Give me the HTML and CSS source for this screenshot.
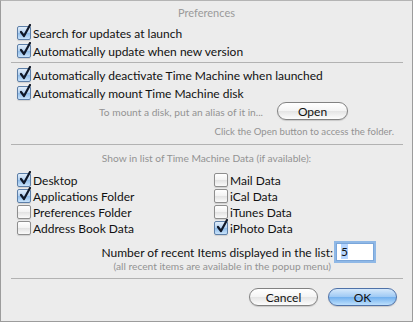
FILE: index.html
```html
<!DOCTYPE html>
<html lang="en">
<head>
  <meta charset="UTF-8">
  <title>Preferences</title>
  <link rel="stylesheet" href="styles.css">
</head>
<body>
  <div class="window">
    <div class="title">Preferences</div>
    <label class="check"><span class="box on"></span>Search for updates at launch</label>
    <label class="check"><span class="box on"></span>Automatically update when new version</label>
    <div class="separator first"></div>
    <label class="check"><span class="box on"></span>Automatically deactivate Time Machine when launched</label>
    <label class="check"><span class="box on"></span>Automatically mount Time Machine disk</label>
    <div class="openRow">
      <span class="hint">To mount a disk, put an alias of it in...</span>
      <button class="pushButton open">Open</button>
    </div>
    <div class="clickRow">
      <span class="hint">Click the Open button to access the folder.</span>
    </div>
    <div class="separator"></div>
    <div class="listLabel hint">Show in list of Time Machine Data (if available):</div>
    <div class="dataGrid">
      <label class="check"><span class="box on"></span>Desktop</label>
      <label class="check"><span class="box"></span>Mail Data</label>
      <label class="check"><span class="box on"></span>Applications Folder</label>
      <label class="check"><span class="box"></span>iCal Data</label>
      <label class="check"><span class="box"></span>Preferences Folder</label>
      <label class="check"><span class="box"></span>iTunes Data</label>
      <label class="check"><span class="box"></span>Address Book Data</label>
      <label class="check"><span class="box on"></span>iPhoto Data</label>
    </div>
    <div class="recentRow">
      <span>Number of recent Items displayed in the list:</span>
      <span class="field"><span class="selected">5</span></span>
    </div>
    <div class="recentNote">(all recent items are available in the popup menu)</div>
    <div class="separator last"></div>
    <div class="buttons">
      <button class="pushButton">Cancel</button>
      <button class="pushButton default">OK</button>
    </div>
  </div>
</body>
</html>
```

FILE: styles.css
```css
* {
  margin: 0;
  padding: 0;
  box-sizing: border-box;
}
body {
  background-color: #fff;
  font-family: Lato, "Liberation Sans", sans-serif;
  font-size: 12px;
  color: #111;
}
.window {
  width: 413px;
  height: 322px;
  background-color: #ececec;
  border: 1px solid #9c9c9c;
  border-top-color: #b4b4b4;
}
.title {
  height: 23px;
  line-height: 24px;
  text-align: center;
  font-size: 11px;
  color: #9a9a9a;
}
.check {
  display: flex;
  align-items: center;
  height: 18px;
  padding-left: 16px;
  white-space: nowrap;
}
.box {
  width: 14px;
  height: 14px;
  margin-right: 2px;
  border: 1px solid #8e8e8e;
  border-radius: 2px;
  background: linear-gradient(#ffffff, #f2f2f2 50%, #e2e2e2 51%, #fafafa);
  box-shadow: 0 1px 1px rgba(0, 0, 0, 0.12);
  position: relative;
  flex: none;
}
.box.on {
  border-color: #5d7fa8;
  background: linear-gradient(#e2eefa, #b3d1f1 50%, #8fbce9 51%, #c9e3fb);
}
.box.on::after {
  content: "";
  position: absolute;
  left: 1px;
  top: -3px;
  width: 12px;
  height: 14px;
  background: no-repeat center / contain url("data:image/svg+xml;utf8,<svg xmlns='http://www.w3.org/2000/svg' viewBox='0 0 12 14'><path d='M2 8 L5 12 L11 1' fill='none' stroke='%23101828' stroke-width='2.2' stroke-linejoin='round' stroke-linecap='round'/></svg>");
}
.separator {
  height: 1px;
  margin: 2px 9px 3px 10px;
  background-color: #b2b2b2;
}
.hint {
  font-size: 10.2px;
  color: #939393;
}
.openRow {
  display: flex;
  justify-content: flex-end;
  align-items: baseline;
  gap: 14px;
  height: 20px;
  padding-right: 64px;
}
.clickRow {
  display: flex;
  justify-content: flex-end;
  height: 20px;
  line-height: 20px;
  padding-right: 18px;
}
.clickRow .hint {
  font-size: 9.6px;
}
.listLabel {
  height: 16px;
  line-height: 16px;
  margin-top: 5px;
  text-align: center;
}
.dataGrid {
  display: grid;
  grid-template-columns: 197px 1fr;
  grid-auto-rows: 16px;
  margin-top: 5px;
}
.recentRow {
  display: flex;
  justify-content: flex-end;
  align-items: center;
  gap: 3px;
  height: 18px;
  margin-top: 8px;
  padding-right: 38px;
}
.field {
  width: 38px;
  height: 18px;
  background-color: #fff;
  border: 1px solid #7aa6da;
  box-shadow: 0 0 0 2px #8fb8e6;
  padding: 1px 4px;
  line-height: 14px;
}
.selected {
  background-color: #b5d5ff;
}
.recentNote {
  height: 11px;
  line-height: 11px;
  font-size: 10.2px;
  color: #939393;
  text-align: right;
  padding-right: 81px;
}
.separator.last {
  margin-top: 6px;
  margin-bottom: 9px;
}
.buttons {
  display: flex;
  justify-content: flex-end;
  gap: 10px;
  padding-right: 15px;
}
.pushButton {
  width: 69px;
  height: 18px;
  border: 1px solid #828282;
  border-radius: 9px;
  background: linear-gradient(#ffffff, #f4f4f4 50%, #e4e4e4 51%, #fdfdfd);
  box-shadow: 0 1px 1px rgba(0, 0, 0, 0.15);
  font-family: Lato, "Liberation Sans", sans-serif;
  font-size: 12px;
  color: #111;
  line-height: 15px;
}
.pushButton.open {
  width: 71px;
}
.pushButton.default {
  border-color: #4f72a8;
  background: linear-gradient(#d6e9fb, #9ec9f4 50%, #72b0ee 51%, #bde0fd);
}
```
